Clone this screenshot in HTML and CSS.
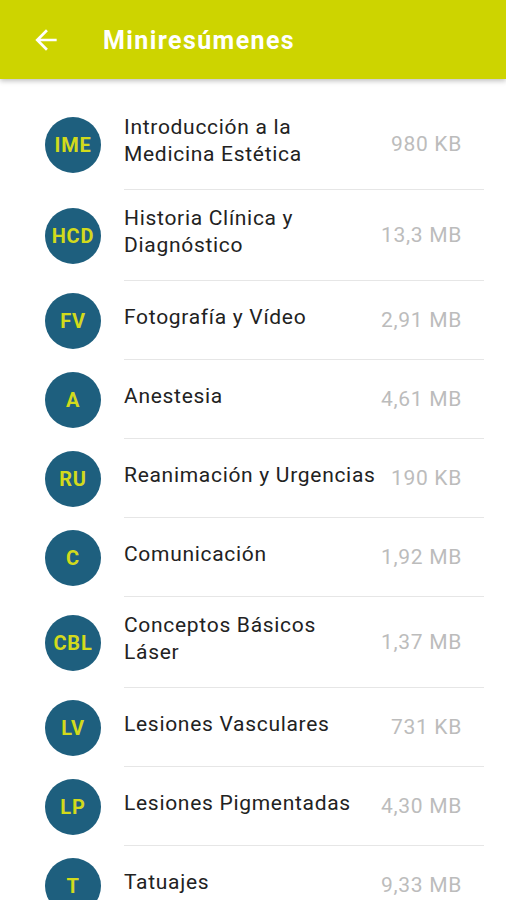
FILE: index.html
```html
<!DOCTYPE html>
<html lang="es">
<head>
<meta charset="UTF-8" />
<meta name="viewport" content="width=device-width, initial-scale=1" />
<title>Miniresúmenes</title>
<link rel="stylesheet" href="styles.css">
</head>
<body>

<header class="barra">
  <button class="voltar" aria-label="Volver">
    <svg width="24" height="24" viewBox="0 0 24 24"><path d="M20 11H7.83l5.59-5.59L12 4l-8 8 8 8 1.41-1.41L7.83 13H20v-2z" fill="#fff"/></svg>
  </button>
  <h1>Miniresúmenes</h1>
</header>

<!-- LISTA -->
<ul class="lista">
  <li class="item">
    <div class="sigla">IME</div>
    <div class="corpo"><span class="titulo">Introducción a la<br>Medicina Estética</span><span class="tamanho">980 KB</span></div>
  </li>
  <li class="item">
    <div class="sigla">HCD</div>
    <div class="corpo"><span class="titulo">Historia Clínica y<br>Diagnóstico</span><span class="tamanho">13,3 MB</span></div>
  </li>
  <li class="item">
    <div class="sigla">FV</div>
    <div class="corpo"><span class="titulo">Fotografía y Vídeo</span><span class="tamanho">2,91 MB</span></div>
  </li>
  <li class="item">
    <div class="sigla">A</div>
    <div class="corpo"><span class="titulo">Anestesia</span><span class="tamanho">4,61 MB</span></div>
  </li>
  <li class="item">
    <div class="sigla">RU</div>
    <div class="corpo"><span class="titulo">Reanimación y Urgencias</span><span class="tamanho">190 KB</span></div>
  </li>
  <li class="item">
    <div class="sigla">C</div>
    <div class="corpo"><span class="titulo">Comunicación</span><span class="tamanho">1,92 MB</span></div>
  </li>
  <li class="item">
    <div class="sigla">CBL</div>
    <div class="corpo"><span class="titulo">Conceptos Básicos<br>Láser</span><span class="tamanho">1,37 MB</span></div>
  </li>
  <li class="item">
    <div class="sigla">LV</div>
    <div class="corpo"><span class="titulo">Lesiones Vasculares</span><span class="tamanho">731 KB</span></div>
  </li>
  <li class="item">
    <div class="sigla">LP</div>
    <div class="corpo"><span class="titulo">Lesiones Pigmentadas</span><span class="tamanho">4,30 MB</span></div>
  </li>
  <li class="item">
    <div class="sigla">T</div>
    <div class="corpo"><span class="titulo">Tatuajes</span><span class="tamanho">9,33 MB</span></div>
  </li>
</ul>

</body>
</html>
```
FILE: styles.css
```css
/* BASE */
* {
  box-sizing: border-box;
}
body {
  margin: 0;
  font-family: Roboto, 'Liberation Sans', sans-serif;
  background: #fff;
  color: #212121;
  overflow: hidden;
}

/* BARRA DO TOPO */
.barra {
  position: relative;
  z-index: 1;
  height: 79px;
  background: #cdd400;
  display: flex;
  align-items: center;
  padding-left: 30px;
  box-shadow: 0 2px 5px rgba(0, 0, 0, 0.25);
}
.voltar {
  background: none;
  border: none;
  padding: 0;
  width: 32px;
  height: 32px;
  display: flex;
  align-items: center;
  justify-content: center;
}
.voltar svg {
  width: 32px;
  height: 32px;
}
.barra h1 {
  margin: 2px 0 0 41px;
  color: #fff;
  font-size: 25px;
  font-weight: 700;
  letter-spacing: 1.4px;
}

/* LISTA */
.lista {
  list-style: none;
  margin: 0;
  padding: 20px 0 0;
}
.item {
  display: flex;
  align-items: center;
  padding-left: 45px;
}
.sigla {
  flex: none;
  width: 56px;
  height: 56px;
  border-radius: 50%;
  background: #1e5f7e;
  color: #d2da1c;
  font-weight: 700;
  font-size: 20px;
  letter-spacing: 0.8px;
  display: flex;
  align-items: center;
  justify-content: center;
  margin-right: 23px;
}
.corpo {
  flex: 1;
  min-height: 79px;
  display: flex;
  align-items: center;
  justify-content: space-between;
  padding: 15px 22px 21px 0;
  margin-right: 22px;
  border-bottom: 1px solid #e6e6e6;
}
.titulo {
  font-size: 21px;
  line-height: 27px;
  letter-spacing: 0.7px;
  color: #222;
}
.tamanho {
  font-size: 21px;
  letter-spacing: 0.7px;
  color: #bcbcbc;
  white-space: nowrap;
  margin-top: 6px;
}
```
